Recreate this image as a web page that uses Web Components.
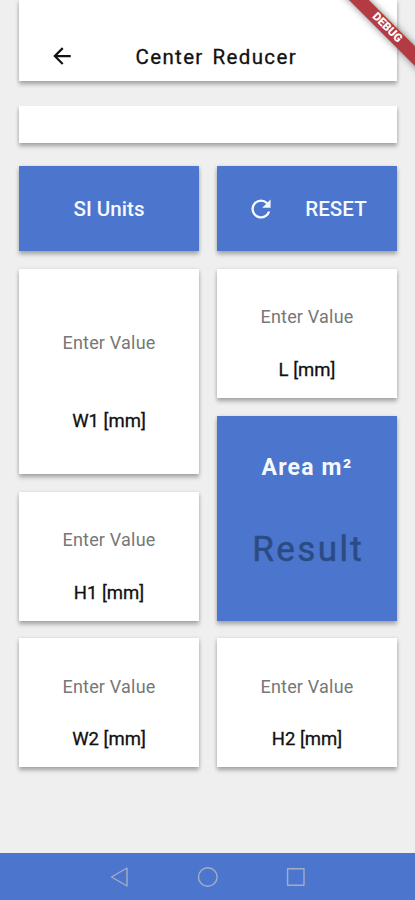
<!DOCTYPE html>
<html lang="en">
<head>
<meta charset="utf-8">
<title>Center Reducer</title>
<style>
html, body { margin: 0; height: 100%; overflow: hidden; background: #efefef; }
body { font-family: Roboto, "Liberation Sans", sans-serif; --lift: 0 4px 4px rgba(0,0,0,.2), 0 1px 4px rgba(0,0,0,.2); }
</style>
</head>
<body>
<reducer-app></reducer-app>
<script>
const define = (name, html) => {
  const template = document.createElement('template');
  template.innerHTML = html;
  customElements.define(name, class extends HTMLElement {
    constructor() {
      super();
      this.attachShadow({ mode: 'open' }).append(template.content.cloneNode(true));
    }
  });
};

define('app-header', `
<style>
:host { display: flex; box-sizing: border-box; height: 81px; margin: 0 18px 0 19px; padding: 44px 0 0 31px; background: #fff; box-shadow: var(--lift); color: #111; }
svg { width: 24px; height: 24px; flex: none; }
h1 { margin: 0 0 0 61.5px; font-size: 20.5px; font-weight: 400; -webkit-text-stroke: .3px #111; line-height: 26px; letter-spacing: 1.35px; word-spacing: 2.5px; white-space: nowrap; }
</style>
<svg viewBox="0 0 24 24" fill="#111"><path d="M20 11H7.83l5.59-5.59L12 4l-8 8 8 8 1.41-1.41L7.83 13H20v-2z" transform="translate(-1.1 -1) scale(1.09)"/></svg>
<h1><slot></slot></h1>`);

define('blank-strip', `
<style>
:host { display: block; height: 46px; margin-top: 25px; overflow: hidden; }
div { height: 37px; margin: 0 18px 0 19px; background: #fff; box-shadow: var(--lift); }
</style>
<div></div>`);

define('action-tile', `
<style>
:host { display: flex; align-items: center; justify-content: center; height: 85px; background: #4c75cd; color: #f4f9ff; font-size: 20.6px; font-weight: 500; line-height: 24px; box-shadow: var(--lift); white-space: nowrap; }
</style>
<slot name="icon"></slot><span><slot></slot></span>`);

define('value-tile', `
<style>
:host { display: flex; flex-direction: column; align-items: center; box-sizing: border-box; height: 129px; padding-top: 36.5px; gap: 28.5px; background: #fff; box-shadow: var(--lift); font-size: 18px; line-height: 24px; white-space: nowrap; }
:host([tall]) { height: 205px; padding-top: 62px; gap: 54px; }
.hint { color: #777; letter-spacing: .2px; }
.name { color: #111; font-size: 18.5px; -webkit-text-stroke: .3px #111; }
</style>
<span class="hint">Enter Value</span><span class="name"><slot></slot></span>`);

define('result-tile', `
<style>
:host { display: flex; flex-direction: column; align-items: center; box-sizing: border-box; height: 205px; padding-top: 37px; background: #4c75cd; box-shadow: var(--lift); white-space: nowrap; }
.title { color: #f4f9ff; font-size: 23px; font-weight: 700; line-height: 30px; letter-spacing: 1.2px; }
.value { margin: 45px 0 0 2.5px; color: #2b4b84; font-size: 35px; font-weight: 400; -webkit-text-stroke: .5px #2b4b84; line-height: 44px; letter-spacing: 2.4px; }
</style>
<span class="title"><slot></slot></span><span class="value">Result</span>`);

define('debug-banner', `
<style>
:host { position: absolute; top: 0; right: 0; width: 90px; height: 90px; overflow: hidden; }
div { position: absolute; left: 2px; top: 21.2px; width: 120px; height: 13.6px; transform: rotate(45deg); background: #b23c42; box-shadow: 0 0 7px rgba(0,0,0,.5); color: #fff; font-size: 11.5px; font-weight: 900; line-height: 13.6px; text-align: center; }
</style>
<div>DEBUG</div>`);

define('system-nav', `
<style>
:host { display: block; height: 47px; background: #4c75cd; }
svg { display: block; width: 415px; height: 47px; }
</style>
<svg viewBox="0 0 415 47" fill="none" stroke="#a3adc5" stroke-width="1.4" stroke-linejoin="round">
<path d="M127 15v18l-15.5-9z"/><circle cx="207.8" cy="24" r="9.3"/><rect x="287.6" y="15.8" width="16.4" height="16.4"/>
</svg>`);

define('reducer-app', `
<style>
:host { display: flex; flex-direction: column; position: relative; height: 900px; width: 415px; overflow: hidden; background: #efefef; }
main { flex: 1; display: grid; grid-template-columns: 180px 180px; column-gap: 18px; padding: 14px 18px 0 19px; align-items: start; }
.column { display: flex; flex-direction: column; gap: 17.8px; }
svg { width: 24px; height: 24px; margin: 0 32px 0 2px; fill: #f4f9ff; }
</style>
<app-header>Center Reducer</app-header>
<blank-strip></blank-strip>
<main>
  <div class="column">
    <action-tile>SI Units</action-tile>
    <value-tile tall>W1 [mm]</value-tile>
    <value-tile>H1 [mm]</value-tile>
    <value-tile>W2 [mm]</value-tile>
  </div>
  <div class="column">
    <action-tile><svg slot="icon" viewBox="0 0 24 24"><path d="M17.65 6.35A7.958 7.958 0 0 0 12 4a8 8 0 1 0 7.73 10h-2.08A6 6 0 1 1 12 6c1.66 0 3.14.69 4.22 1.78L13 11h7V4l-2.35 2.35z" transform="translate(-2.4 -2.4) scale(1.2)"/></svg>RESET</action-tile>
    <value-tile>L [mm]</value-tile>
    <result-tile>Area m²</result-tile>
    <value-tile>H2 [mm]</value-tile>
  </div>
</main>
<system-nav></system-nav>
<debug-banner></debug-banner>`);
</script>
</body>
</html>
